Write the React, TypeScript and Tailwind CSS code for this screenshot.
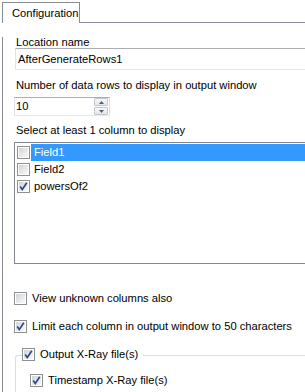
import type { ReactNode } from "react";

function Check({ checked = false }: { checked?: boolean }) {
  return (
    <span className="flex h-[13px] w-[13px] shrink-0 border border-[#8e8f8f] bg-white p-px">
      <span className="relative flex-1 bg-gradient-to-br from-[#cfd3d8] via-[#e6e7e9] to-[#f9f9f9]">
        {checked && (
          <svg className="absolute -left-[1px] -top-[1px]" width="11" height="11" viewBox="0 0 11 11">
            <path d="M2.2 5.4 L4.3 8.4 L8.8 1.8" fill="none" stroke="#2c4a8a" strokeWidth="1.7" />
          </svg>
        )}
      </span>
    </span>
  );
}

function CheckRow({ checked, children, className = "" }: { checked?: boolean; children: ReactNode; className?: string }) {
  return (
    <label className={`flex h-[13px] items-center gap-[5px] ${className}`}>
      <Check checked={checked} />
      <span>{children}</span>
    </label>
  );
}

const fields = [
  { name: "Field1", checked: false, selected: true },
  { name: "Field2", checked: false, selected: false },
  { name: "powersOf2", checked: true, selected: false },
];

export default function App() {
  return (
    <div className="h-[392px] w-[305px] overflow-hidden bg-white pl-[2px] pt-[2px] font-['Liberation_Sans',Arial,sans-serif] text-[11.2px] leading-[13px] text-black">
      <div className="flex h-[21px]">
        <div className="w-[89px] border border-b-0 border-[#898c95] bg-white pl-[9px] pt-[4px]">Configuration</div>
        <div className="w-[400px] border-b border-[#898c95]" />
      </div>

      <div className="h-[400px] w-[420px] border-l border-[#898c95] pl-[11px]">
        <div className="mt-[14px] pl-[2px] leading-[11px]">Location name</div>
        <div className="ml-[1px] flex h-[22px] items-center border border-[#abadb3] border-b-[#e3e9ef] border-l-[#e2e3ea] border-r-[#dbdfe6] pl-[2px]">
          AfterGenerateRows1
        </div>

        <div className="mt-[10px] pl-[2px] leading-[11px]">Number of data rows to display in output window</div>
        <div className="mt-[6px] flex h-[19px] w-[96px] items-center border border-[#abadb3] border-b-[#e3e9ef] border-l-[#e2e3ea] border-r-[#dbdfe6] pl-[1px]">
          <span className="flex-1">10</span>
          <div className="mr-[1px] flex flex-col gap-[1px]">
            <span className="flex h-[8px] w-[14px] items-center justify-center rounded-[1px] border border-[#c3c7cf] bg-gradient-to-b from-[#f8f8f8] to-[#e4e6ea]">
              <svg width="5" height="3" viewBox="0 0 5 3">
                <path d="M0 3 L2.5 0 L5 3 Z" fill="#4c607f" />
              </svg>
            </span>
            <span className="flex h-[8px] w-[14px] items-center justify-center rounded-[1px] border border-[#c3c7cf] bg-gradient-to-b from-[#f8f8f8] to-[#e4e6ea]">
              <svg width="5" height="3" viewBox="0 0 5 3">
                <path d="M0 0 L2.5 3 L5 0 Z" fill="#4c607f" />
              </svg>
            </span>
          </div>
        </div>

        <div className="mt-[9px] pl-[2px] leading-[11px]">Select at least 1 column to display</div>
        <div className="mt-[6px] h-[122px] border border-[#828790] pt-px">
          {fields.map((f) => (
            <div key={f.name} className="flex h-[17px] items-center pl-[2px]">
              <Check checked={f.checked} />
              <span className={`ml-[1px] flex h-full flex-1 items-center pl-[3px] ${f.selected ? "bg-[#3399ff] text-white" : ""}`}>
                {f.name}
              </span>
            </div>
          ))}
        </div>

        <div className="mt-[28px] flex flex-col gap-[15px]">
          <CheckRow>View unknown columns also</CheckRow>
          <CheckRow checked>Limit each column in output window to 50 characters</CheckRow>

          <div className="ml-[1px]">
            <div className="flex h-[13px]">
              <span className="mt-[7px] w-[7px] rounded-tl-[3px] border-l border-t border-[#d5dfe5]" />
              <CheckRow checked className="pr-[5px]">Output X-Ray file(s)</CheckRow>
              <span className="mt-[7px] flex-1 border-t border-[#d5dfe5]" />
            </div>
            <div className="h-[60px] border-l border-[#d5dfe5] pl-[14px] pt-[13px]">
              <CheckRow checked>Timestamp X-Ray file(s)</CheckRow>
            </div>
          </div>
        </div>
      </div>
    </div>
  );
}
